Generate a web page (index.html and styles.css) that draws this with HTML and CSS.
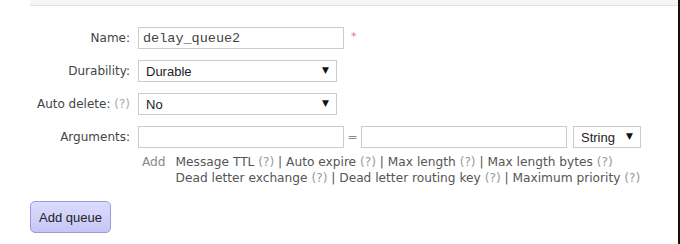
FILE: index.html
```html
<!DOCTYPE html>
<html lang="en">
<head>
  <meta charset="UTF-8" />
  <title>Add a new queue</title>
  <link rel="stylesheet" href="styles.css">
</head>
<body>
  <div class="page">
    <div class="topbar"></div>
    <form class="queue-form">
      <div class="grid">
        <label class="label" for="name">Name:</label>
        <div class="field">
          <input type="text" id="name" class="text-input mono" value="delay_queue2" />
          <span class="required">*</span>
        </div>

        <label class="label" for="durable">Durability:</label>
        <div class="field">
          <div class="select-wrap wide">
            <select id="durable">
              <option>Durable</option>
              <option>Transient</option>
            </select>
          </div>
        </div>

        <label class="label" for="autodelete">Auto delete: <span class="help">(?)</span></label>
        <div class="field">
          <div class="select-wrap wide">
            <select id="autodelete">
              <option>No</option>
              <option>Yes</option>
            </select>
          </div>
        </div>

        <label class="label" for="argKey">Arguments:</label>
        <div class="field">
          <input type="text" id="argKey" class="text-input" />
          <span class="equals">=</span>
          <input type="text" class="text-input" />
          <div class="select-wrap narrow">
            <select>
              <option>String</option>
              <option>Number</option>
              <option>Boolean</option>
            </select>
          </div>
        </div>

        <div></div>
        <div class="arg-help">
          <span class="add">Add</span>
          <div class="links">
            <div>Message TTL <span class="help">(?)</span> | Auto expire <span class="help">(?)</span> | Max length <span class="help">(?)</span> | Max length bytes <span class="help">(?)</span></div>
            <div>Dead letter exchange <span class="help">(?)</span> | Dead letter routing key <span class="help">(?)</span> | Maximum priority <span class="help">(?)</span></div>
          </div>
        </div>
      </div>

      <button type="submit" class="add-btn">Add queue</button>
    </form>
  </div>
</body>
</html>
```

FILE: styles.css
```css
* {
  margin: 0;
  padding: 0;
  box-sizing: border-box;
}
html,
body {
  height: 100%;
}
body {
  background: #fff;
  font-family: "DejaVu Sans", Verdana, sans-serif;
  font-size: 12px;
  color: #444;
}
.page {
  height: 100%;
  border-right: 2px solid #111;
  overflow: hidden;
}
.topbar {
  height: 6px;
  margin-left: 30px;
  background: #f6f6f6;
  border-bottom: 1px solid #e2e2e2;
}
.queue-form {
  padding-top: 21px;
}
.grid {
  display: grid;
  grid-template-columns: 130px 1fr;
  column-gap: 8px;
  row-gap: 11px;
  align-items: center;
}
.label {
  text-align: right;
  white-space: nowrap;
  color: #444;
}
.help {
  color: #aaa;
}
.field {
  display: flex;
  align-items: center;
  height: 22px;
}
.text-input {
  width: 206px;
  height: 22px;
  border: 1px solid #ccc;
  padding: 0 4px;
  font-family: "Liberation Sans", Arial, sans-serif;
  font-size: 13px;
  color: #333;
  outline: none;
}
.mono {
  font-family: "Liberation Mono", "Courier New", monospace;
  font-size: 13.5px;
  color: #444;
}
.required {
  color: #e08080;
  font-size: 11px;
  margin-left: 7px;
  align-self: flex-start;
  margin-top: 3px;
}
.equals {
  width: 17px;
  text-align: center;
  color: #888;
}
.select-wrap {
  position: relative;
  height: 22px;
}
.select-wrap.wide {
  width: 199px;
}
.select-wrap.narrow {
  width: 68px;
  margin-left: 6px;
}
.select-wrap select {
  appearance: none;
  -webkit-appearance: none;
  width: 100%;
  height: 100%;
  border: 1px solid #ccc;
  background: #fff;
  padding: 0 7px;
  font-family: "Liberation Sans", Arial, sans-serif;
  font-size: 13px;
  color: #222;
  outline: none;
}
.select-wrap::after {
  content: "\25BC";
  position: absolute;
  right: 8px;
  top: 5px;
  font-size: 9px;
  color: #111;
  pointer-events: none;
}
.arg-help {
  display: flex;
  gap: 10px;
  padding-left: 4px;
  margin-top: -5px;
  line-height: 16px;
  font-size: 12.2px;
  color: #555;
  white-space: nowrap;
}
.add {
  color: #888;
}
.links .help {
  color: #999;
}
.add-btn {
  margin: 15px 0 0 30px;
  width: 81px;
  height: 32px;
  border: 1px solid #9a9ad6;
  border-radius: 5px;
  background: linear-gradient(#dcdcff, #c6c6f6);
  font-family: "Liberation Sans", Arial, sans-serif;
  font-size: 13px;
  color: #222;
  cursor: pointer;
}
```
